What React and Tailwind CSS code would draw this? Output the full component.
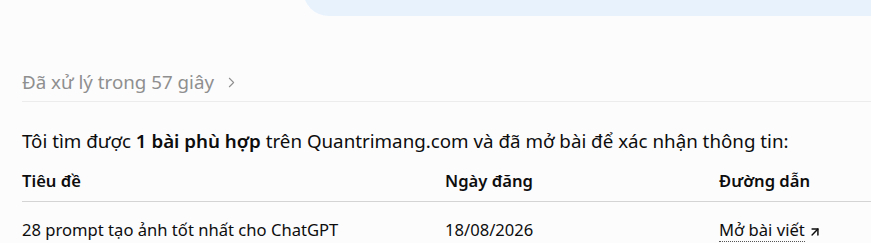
import { ArrowUpRight, ChevronRight } from 'lucide-react';

export default function App() {
  return (
    <div className="min-h-[243px] w-[871px] overflow-hidden bg-[#fcfcfd] font-['Noto_Sans',sans-serif] text-[#0d0d0d]">
      {/* User message bubble (cropped) */}
      <div className="flex justify-end">
        <div className="-mt-10 h-[56px] w-[568px] rounded-bl-[26px] bg-[#e8f2fd]" />
      </div>

      <div className="pl-[22px] pt-[53px]">
        {/* Thinking summary */}
        <button className="flex items-center gap-[9px] pb-[6px] text-[18.75px] leading-[26px] text-[#8f8f8f]">
          Đã xử lý trong 57 giây
          <ChevronRight size={17} strokeWidth={1.5} />
        </button>
        <div className="h-px bg-[#ececec]" />

        <p className="pt-[25px] text-[18.75px] leading-[28px]">
          Tôi tìm được <strong className="font-semibold">1 bài phù hợp</strong> trên Quantrimang.com và đã mở bài để xác nhận thông tin:
        </p>

        {/* Results table */}
        <table className="mt-[10px] w-[1000px] text-left text-[16.6px] leading-[24px]">
          <thead>
            <tr className="border-b border-[#d4d4d4]">
              <th className="w-[423px] pb-[8px] pt-[4px] font-semibold">Tiêu đề</th>
              <th className="w-[274px] pb-[8px] pt-[4px] font-semibold">Ngày đăng</th>
              <th className="pb-[8px] pt-[4px] font-semibold">Đường dẫn</th>
            </tr>
          </thead>
          <tbody>
            <tr>
              <td className="pt-[16px]">28 prompt tạo ảnh tốt nhất cho ChatGPT</td>
              <td className="pt-[16px]">18/08/2026</td>
              <td className="pt-[16px]">
                <a className="inline-flex items-center gap-[3px]">
                  <span className="border-b border-dotted border-[#555] leading-[22px]">Mở bài viết</span>
                  <ArrowUpRight size={14} strokeWidth={2.5} className="mt-[3px]" />
                </a>
              </td>
            </tr>
          </tbody>
        </table>
      </div>
    </div>
  );
}
